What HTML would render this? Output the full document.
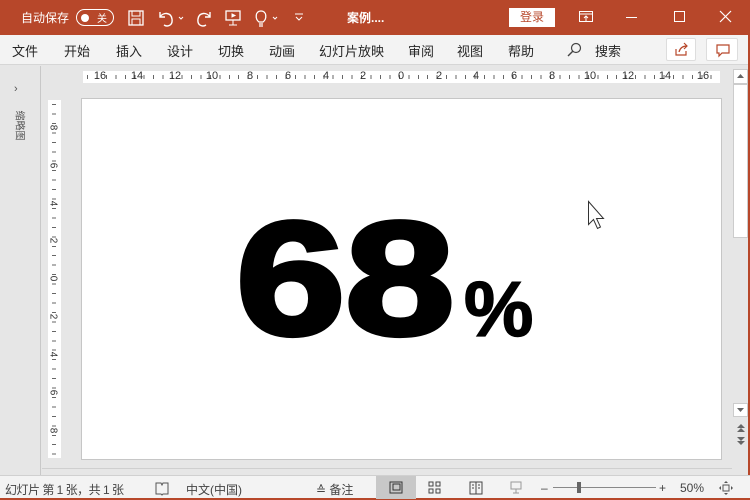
<!DOCTYPE html>
<html><head><meta charset="utf-8"><style>
*{margin:0;padding:0;box-sizing:border-box}
body{width:750px;height:500px;overflow:hidden;background:#e6e6e6;font-family:"Liberation Sans","Noto Sans CJK SC",sans-serif;position:relative;font-size:13px;color:#262626}
.abs{position:absolute}
#title{left:0;top:0;width:750px;height:35px;background:#b7472a;color:#fff}
#menu{left:0;top:35px;width:750px;height:30px;background:#f3f3f3;border-bottom:1px solid #d6d6d6}
#menu span{position:absolute;top:6px;font-size:13px}
#status{left:0;top:475px;width:750px;height:25px;background:#f3f3f3;border-top:1px solid #d0d0d0;border-bottom:2px solid #b7472a;font-size:12px;color:#444}
#status span{position:absolute;top:5px}
.hr span{position:absolute;top:-1px;font-size:11px;color:#333;transform:translateX(-50%)}
.vr span{position:absolute;left:2px;font-size:10px;color:#333;transform:rotate(90deg)}
</style></head><body>
<div id="title" class="abs">
 <div class="abs" style="left:21px;top:9px;font-size:12px">自动保存</div>
 <div class="abs" style="left:76px;top:9px;width:38px;height:17px;border:1.5px solid #fff;border-radius:9px"><div class="abs" style="left:4px;top:3.5px;width:8px;height:8px;background:#fff;border-radius:50%"></div><div class="abs" style="left:20px;top:0px;font-size:10px">关</div></div>
 <svg class="abs" style="left:128px;top:10px" width="17" height="17"><rect x="1" y="1" width="14" height="14" fill="none" stroke="#fff" stroke-width="1.3"/><rect x="4" y="1" width="8" height="5" fill="none" stroke="#fff"/><rect x="4" y="9" width="8" height="6" fill="none" stroke="#fff"/></svg>
 <svg class="abs" style="left:157px;top:9px" width="30" height="18"><path d="M3 3v5h5M3 8c3-5 11-5 12 2s-5 8-8 6" fill="none" stroke="#fff" stroke-width="1.4"/><path d="M22 8l2 2 2-2" fill="none" stroke="#fff"/></svg>
 <svg class="abs" style="left:195px;top:9px" width="18" height="18"><path d="M15 3v5h-5M15 8c-3-5-11-5-12 2s5 8 8 6" fill="none" stroke="#fff" stroke-width="1.4"/></svg>
 <svg class="abs" style="left:224px;top:9px" width="18" height="18"><rect x="2" y="2" width="14" height="9" fill="none" stroke="#fff" stroke-width="1.3"/><path d="M9 11v5M5 16h8M8 5l3 1.5-3 1.5z" stroke="#fff" fill="#fff"/></svg>
 <svg class="abs" style="left:251px;top:9px" width="34" height="20"><path d="M8 13c-4-3-4-11 2-11s6 8 2 11zM8 15h4M8 17h4" fill="none" stroke="#fff" stroke-width="1.3"/><path d="M22 8l2 2 2-2" fill="none" stroke="#fff"/></svg>
 <svg class="abs" style="left:294px;top:11px" width="10" height="12"><path d="M1 3h8M2 6l3 3 3-3" fill="none" stroke="#fff"/></svg>
 <div class="abs" style="left:347px;top:9px;font-size:12px;font-weight:bold">案例....</div>
 <div class="abs" style="left:509px;top:8px;width:46px;height:19px;background:#fff;color:#b7472a;text-align:center;font-size:12px;line-height:19px">登录</div>
 <svg class="abs" style="left:578px;top:9px" width="16" height="16"><rect x="1.5" y="2.5" width="13" height="10" fill="none" stroke="#fff"/><path d="M1.5 5h13M8 12V7M6 9l2-2 2 2" fill="none" stroke="#fff"/></svg>
 <div class="abs" style="left:626px;top:17px;width:11px;height:1px;background:#fff"></div>
 <div class="abs" style="left:674px;top:11px;width:11px;height:11px;border:1px solid #fff"></div>
 <svg class="abs" style="left:719px;top:10px" width="14" height="14"><path d="M1 1l11 11M12 1L1 12" stroke="#fff" stroke-width="1.2"/></svg>
</div>
<div id="menu" class="abs">
 <span style="left:12px">文件</span><span style="left:64px">开始</span><span style="left:116px">插入</span><span style="left:167px">设计</span><span style="left:218px">切换</span><span style="left:269px">动画</span><span style="left:319px">幻灯片放映</span><span style="left:408px">审阅</span><span style="left:457px">视图</span><span style="left:508px">帮助</span><span style="left:595px">搜索</span>
 <svg class="abs" style="left:566px;top:7px" width="16" height="16"><circle cx="10" cy="6" r="4.5" fill="none" stroke="#444" stroke-width="1.2"/><path d="M7 9l-5 5" stroke="#444" stroke-width="1.4"/></svg>
 <div class="abs" style="left:666px;top:3px;width:30px;height:23px;background:#fff;border:1px solid #ddd;border-radius:2px"><svg width="28" height="21"><path d="M9 10v6h10v-4M12 13c1-4 4-6 8-6M17 4l3 3-3 3" fill="none" stroke="#b7472a" stroke-width="1.2"/></svg></div>
 <div class="abs" style="left:706px;top:3px;width:32px;height:23px;background:#fff;border:1px solid #ddd;border-radius:2px"><svg width="30" height="21"><path d="M10 6h12v8h-7l-3 3v-3h-2z" fill="none" stroke="#b7472a" stroke-width="1.2"/></svg></div>
</div>
<div class="abs" style="left:0;top:66px;width:41px;height:409px;background:#e6e6e6;border-right:1px solid #c8c8c8"></div>
<div class="abs" style="left:14px;top:83px;font-size:11px;color:#555">›</div>
<div class="abs" style="left:6px;top:118px;font-size:10px;color:#555;transform:rotate(90deg);white-space:nowrap">缩略图</div>
<div class="abs hr" style="left:83px;top:71px;width:637px;height:12px;background:#fff repeating-linear-gradient(90deg,transparent 0 4px,#666 4px 5px,transparent 5px 9.45px) 0 4px/100% 4px no-repeat">
 <span style="left:17px">16</span><span style="left:54px">14</span><span style="left:92px">12</span><span style="left:129px">10</span><span style="left:167px">8</span><span style="left:205px">6</span><span style="left:243px">4</span><span style="left:280px">2</span><span style="left:318px">0</span><span style="left:356px">2</span><span style="left:393px">4</span><span style="left:431px">6</span><span style="left:469px">8</span><span style="left:507px">10</span><span style="left:545px">12</span><span style="left:582px">14</span><span style="left:620px">16</span>
</div>
<div class="abs vr" style="left:48px;top:100px;width:13px;height:358px;background:#fff repeating-linear-gradient(transparent 0 4px,#666 4px 5px,transparent 5px 9.45px) 4px 0/4px 100% no-repeat">
 <span style="top:22px">8</span><span style="top:60px">6</span><span style="top:98px">4</span><span style="top:135px">2</span><span style="top:173px">0</span><span style="top:211px">2</span><span style="top:249px">4</span><span style="top:287px">6</span><span style="top:325px">8</span>
</div>
<div class="abs" style="left:81px;top:98px;width:641px;height:362px;background:#fff;border:1px solid #c6c6c6"></div>
<div class="abs" style="left:236px;top:199px;font-size:161px;font-weight:bold;line-height:1;color:#000;letter-spacing:0px;-webkit-text-stroke:5px #000;transform:scaleX(1.22);transform-origin:0 0">68</div>
<div class="abs" style="left:464px;top:270px;font-size:78px;font-weight:bold;line-height:1;color:#000;-webkit-text-stroke:1.5px #000">%</div>
<svg class="abs" style="left:587px;top:200px" width="22" height="34"><path d="M1.5 1.5v23l5-5 4 9 3-1.5-4-8.5h7z" fill="#fff" stroke="#333"/></svg>
<div class="abs" style="left:733px;top:68px;width:15px;height:402px;background:#e6e6e6"></div>
<div class="abs" style="left:733px;top:69px;width:15px;height:15px;background:#fff;border:1px solid #ccc"><svg width="13" height="13"><path d="M3 8l3.5-4 3.5 4z" fill="#666"/></svg></div>
<div class="abs" style="left:733px;top:84px;width:15px;height:154px;background:#fff;border:1px solid #ccc"></div>
<div class="abs" style="left:733px;top:403px;width:15px;height:14px;background:#fff;border:1px solid #ccc"><svg width="13" height="12"><path d="M3 4l3.5 4 3.5-4z" fill="#666"/></svg></div>
<svg class="abs" style="left:735px;top:420px" width="12" height="30"><path d="M2 8l4-4 4 4zM2 12l4-4 4 4zM2 21l4 4 4-4zM2 17l4 4 4-4z" fill="#666"/></svg>
<div class="abs" style="left:748px;top:35px;width:2px;height:465px;background:#b7472a"></div>
<div class="abs" style="left:42px;top:468px;width:690px;height:1px;background:#cfcfcf"></div>
<div id="status" class="abs">
 <span style="left:5px;letter-spacing:-0.5px">幻灯片 第 1 张，共 1 张</span>
 <svg class="abs" style="left:155px;top:6px" width="14" height="14"><path d="M1 1h5l1 2 1-2h5v11H8l-1 1-1-1H1z" fill="none" stroke="#555"/></svg>
 <span style="left:186px">中文(中国)</span>
 <span style="left:316px">≙ 备注</span>
 <div class="abs" style="left:376px;top:0;width:40px;height:23px;background:#c8c8c8"></div>
 <svg class="abs" style="left:389px;top:5px" width="14" height="13"><rect x="1" y="1" width="12" height="11" fill="none" stroke="#333"/><rect x="4" y="3" width="7" height="6" fill="none" stroke="#333"/></svg>
 <svg class="abs" style="left:428px;top:5px" width="14" height="13"><rect x="1" y="1" width="4" height="4" fill="none" stroke="#444"/><rect x="8" y="1" width="4" height="4" fill="none" stroke="#444"/><rect x="1" y="8" width="4" height="4" fill="none" stroke="#444"/><rect x="8" y="8" width="4" height="4" fill="none" stroke="#444"/></svg>
 <svg class="abs" style="left:469px;top:5px" width="14" height="14"><path d="M1 1h12v12H1zM7 1v12M3 4h2M3 7h2M9 4h2M9 7h2" fill="none" stroke="#444"/></svg>
 <svg class="abs" style="left:509px;top:5px" width="14" height="14"><path d="M2 1h10v7H2zM7 8v4M4 12h6" fill="none" stroke="#999"/></svg>
 <span style="left:541px">–</span>
 <div class="abs" style="left:553px;top:11px;width:103px;height:1px;background:#888"></div>
 <div class="abs" style="left:577px;top:6px;width:4px;height:11px;background:#666"></div>
 <span style="left:659px">+</span>
 <span style="left:680px">50%</span>
 <svg class="abs" style="left:718px;top:4px" width="16" height="16"><path d="M8 1l2 2H6zM8 15l2-2H6zM1 8l2-2v4zM15 8l-2-2v4z" fill="#555"/><rect x="5" y="5" width="6" height="6" fill="none" stroke="#555"/></svg>
</div>
</body></html>
